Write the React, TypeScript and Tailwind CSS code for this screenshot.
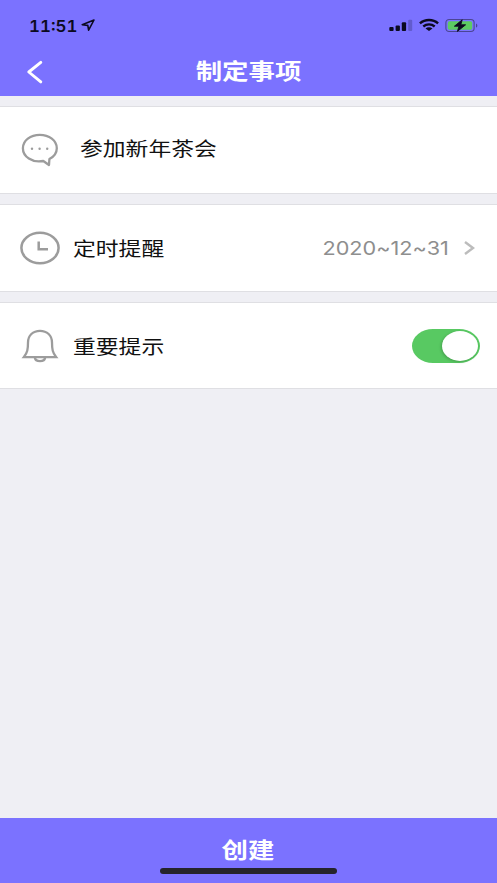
import { useState } from 'react'
import type { ReactNode } from 'react'

function StatusBar() {
  return (
    <div className="flex h-[50px] items-center justify-between pl-[30px] pr-[19px]">
      <div className="flex items-center">
        <span className="w-[51px] whitespace-nowrap">
          <span className="-ml-px inline-block origin-left scale-x-[1.06] font-['Inter'] text-[16px] font-semibold leading-5 tabular-nums">
            11:51
          </span>
        </span>
        <svg width="15" height="14" viewBox="0 0 15 14" fill="none" stroke="#0b0a20" strokeWidth="1.6" strokeLinejoin="round">
          <path d="M1.2 6.7 L13 2 L7.6 12.2 L6.8 7.4 Z" />
        </svg>
      </div>
      <div className="flex items-center">
        <svg width="24" height="14" viewBox="0 0 24 14" fill="#0b0a20">
          <rect x="0.3" y="9" width="4.3" height="4" rx="1" />
          <rect x="6.6" y="7.5" width="4.3" height="5.5" rx="1" />
          <rect x="12.8" y="4.2" width="4.3" height="8.8" rx="1" />
          <rect x="19.2" y="1.7" width="4" height="11.3" rx="1" opacity="0.22" />
        </svg>
        <svg className="ml-[6px]" width="20" height="14" viewBox="0 0 20 14" fill="none" stroke="#0b0a20" strokeWidth="2.4">
          <path d="M0.9 5.4 C6 0.8 14 0.8 19.1 5.4" />
          <path d="M4.3 8.5 C7.6 5.7 12.4 5.7 15.7 8.5" />
          <path d="M10 13 L6.5 10.4 C8.6 9 11.4 9 13.5 10.4 Z" fill="#0b0a20" stroke="none" />
        </svg>
        <svg className="ml-[6px]" width="33" height="15" viewBox="0 0 33 15" fill="none">
          <rect x="0.9" y="1.5" width="28.2" height="12" rx="3.2" stroke="#4a4593" strokeWidth="1.1" />
          <rect x="2.8" y="3.3" width="24.4" height="8.4" rx="1.6" fill="#5ccb62" />
          <path d="M31 5.4 C32.8 6 32.8 9 31 9.6 Z" fill="#4a4593" />
          <path
            d="M17.2 1.8 L9.4 8.2 H14 L12.4 13.4 L20.6 6.8 H15.8 Z"
            fill="#0b0a20"
            stroke="#0b0a20"
            strokeWidth="0.9"
            strokeLinejoin="round"
          />
        </svg>
      </div>
    </div>
  )
}

function ChatIcon() {
  return (
    <svg width="40" height="36" viewBox="0 0 40 36" fill="none" stroke="#9c9c9c" strokeWidth="2.3">
      <path
        d="M23.3 29 C12 31.2 2.9 24.5 2.9 16.2 C2.9 8.4 10.5 2.8 19.8 2.8 C29.2 2.8 36.8 8.6 36.8 16.2 C36.8 20.4 34.2 24.5 29.4 27 L29 33 Z"
        strokeLinejoin="round"
      />
      <g fill="#9c9c9c" stroke="none">
        <circle cx="12" cy="16.7" r="1.2" />
        <circle cx="19.6" cy="16.7" r="1.2" />
        <circle cx="27.2" cy="16.7" r="1.2" />
      </g>
    </svg>
  )
}

function ClockIcon() {
  return (
    <svg width="40" height="36" viewBox="0 0 40 36" fill="none" stroke="#9c9c9c" strokeWidth="2.5">
      <ellipse cx="20" cy="18" rx="18.6" ry="15.2" />
      <path d="M18.7 11.5 V19.3 H28" />
    </svg>
  )
}

function BellIcon() {
  return (
    <svg width="40" height="36" viewBox="0 0 40 36" fill="none" stroke="#9c9c9c" strokeWidth="2.3">
      <path d="M3.8 29.2 C7.4 24.5 8 21.5 8 14.5 C8 7.4 13 2.8 20 2.8 C27 2.8 32 7.4 32 14.5 C32 21.5 32.6 24.5 36.2 29.2 Z" />
      <path d="M14.7 29 C15.5 34.6 24.5 34.6 25.3 29" />
    </svg>
  )
}

type RowProps = {
  icon: ReactNode
  label: string
  labelClass: string
  children?: ReactNode
}

function Row({ icon, label, labelClass, children }: RowProps) {
  return (
    <div className="flex h-[88px] items-center border-y border-[#dfdfe3] bg-white pl-5 last:h-[87px]">
      {icon}
      <span className={`origin-left scale-x-[1.2] whitespace-nowrap text-[19px] leading-6 text-[#111] ${labelClass}`}>
        {label}
      </span>
      {children}
    </div>
  )
}

export default function App() {
  const [important, setImportant] = useState(true)

  return (
    <div className="flex h-[883px] w-[497px] flex-col overflow-hidden bg-[#efeff4] font-['Noto_Sans_CJK_SC',sans-serif]">
      <header className="h-24 bg-[#7b72ff] text-[#0b0a20]">
        <StatusBar />
        <div className="grid h-[43px] grid-cols-[60px_1fr_60px] items-center text-white">
          <button className="pl-[26px]" aria-label="返回">
            <svg width="18" height="24" viewBox="0 0 18 24" fill="none" stroke="currentColor" strokeWidth="2.9" strokeLinecap="round" strokeLinejoin="round">
              <path d="M14.8 2.3 L2.8 12 L14.8 21.9" />
            </svg>
          </button>
          <h1 className="mb-[5px] scale-x-[1.2] text-center text-[22px] font-bold leading-7">制定事项</h1>
        </div>
      </header>

      <main className="flex flex-1 flex-col gap-[10px] pt-[10px]">
        <Row icon={<ChatIcon />} label="参加新年茶会" labelClass="ml-5 -mt-[5px]" />
        <Row icon={<ClockIcon />} label="定时提醒" labelClass="ml-[13px]">
          <div className="ml-auto flex items-center pr-[22px]">
            <span className="mt-[2px] origin-right scale-x-[1.14] whitespace-nowrap font-['Inter'] text-[19px] leading-6 text-[#8e8e8e] [font-feature-settings:'calt'_0]">
              2020~12~31
            </span>
            <svg className="ml-[15px]" width="11" height="14" viewBox="0 0 11 14" fill="none" stroke="#bcbcbc" strokeWidth="2.4">
              <path d="M1 1 L9 7 L1 13" />
            </svg>
          </div>
        </Row>
        <Row icon={<BellIcon />} label="重要提示" labelClass="ml-[13px]">
          <button
            role="switch"
            aria-checked={important}
            aria-label="重要提示"
            onClick={() => setImportant(!important)}
            className={`ml-auto mr-[17px] flex h-[34px] w-[68px] items-center rounded-[21px/17px] px-[2px] ${important ? 'justify-end bg-[#58c962]' : 'justify-start bg-gray-300'}`}
          >
            <span className="h-[30px] w-[36px] rounded-[50%] bg-white shadow-[-1px_1px_3px_rgba(0,0,0,0.2)]" />
          </button>
        </Row>
      </main>

      <footer className="flex h-[65px] flex-col items-center bg-[#7b72ff] pt-[16px]">
        <button className="scale-x-[1.2] text-[22px] font-bold leading-7 text-white">创建</button>
        <div className="mt-[6px] h-[6px] w-[177px] rounded-full bg-[#25242b]" />
      </footer>
    </div>
  )
}
